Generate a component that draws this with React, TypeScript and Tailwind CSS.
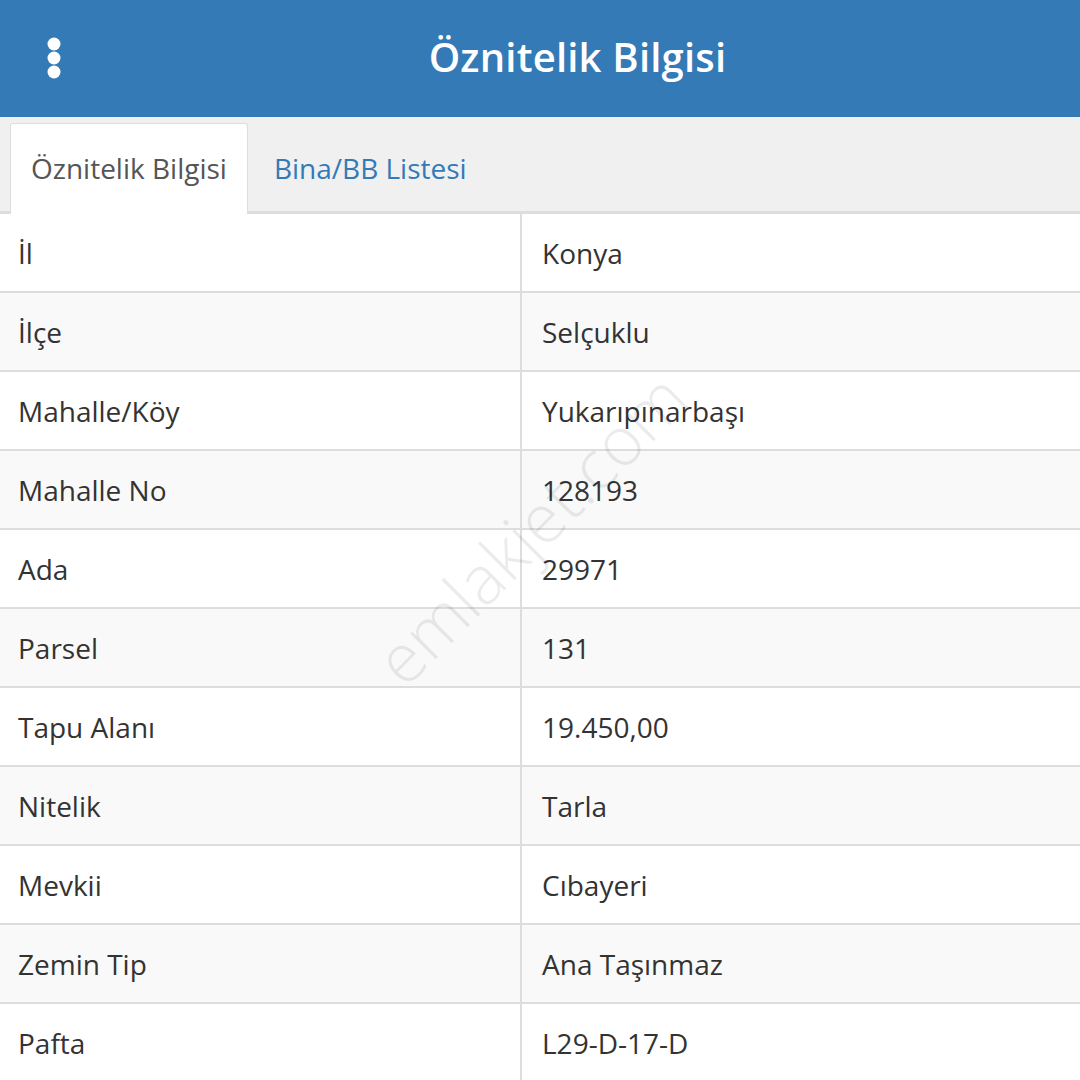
import { useState } from "react"

interface Row {
  label: string
  value: string
}

const rows: Row[] = [
  { label: "İl", value: "Konya" },
  { label: "İlçe", value: "Selçuklu" },
  { label: "Mahalle/Köy", value: "Yukarıpınarbaşı" },
  { label: "Mahalle No", value: "128193" },
  { label: "Ada", value: "29971" },
  { label: "Parsel", value: "131" },
  { label: "Tapu Alanı", value: "19.450,00" },
  { label: "Nitelik", value: "Tarla" },
  { label: "Mevkii", value: "Cıbayeri" },
  { label: "Zemin Tip", value: "Ana Taşınmaz" },
  { label: "Pafta", value: "L29-D-17-D" },
]

export default function App() {
  const [tab, setTab] = useState(0)

  return (
    <div
      className="relative w-[1080px] h-[1080px] overflow-hidden bg-white text-[#333]"
      style={{ fontFamily: '"Open Sans", "Noto Sans", sans-serif' }}
    >
      {/* header */}
      <div className="relative flex items-center justify-center h-[117px] bg-[#337ab7] text-white">
        <button className="absolute left-[40px] top-[36px] w-[28px] h-[44px] flex items-center justify-center">
          <svg width="14" height="42" viewBox="0 0 14 42" fill="white">
            <circle cx="7" cy="7" r="6.5" />
            <circle cx="7" cy="21" r="6.5" />
            <circle cx="7" cy="35" r="6.5" />
          </svg>
        </button>
        <h1 className="text-[40px] font-semibold tracking-[0.2px] pl-[75px] -mt-[4px]">Öznitelik Bilgisi</h1>
      </div>

      {/* tabs */}
      <div className="flex items-end h-[97px] bg-[#f0f0f0] border-b-[3px] border-[#dddddd] pl-[10px]">
        <button
          onClick={() => setTab(0)}
          className={`h-[91px] px-[20px] -mb-[3px] text-[28px] rounded-t-[3px] ${
            tab === 0
              ? "bg-white border border-b-0 border-[#dddddd] text-[#555]"
              : "text-[#337ab7]"
          }`}
        >
          <span className="relative -top-[1px]">Öznitelik Bilgisi</span>
        </button>
        <button
          onClick={() => setTab(1)}
          className={`h-[91px] px-[26px] -mb-[3px] text-[28px] rounded-t-[3px] ${
            tab === 1
              ? "bg-white border border-b-0 border-[#dddddd] text-[#555]"
              : "text-[#337ab7]"
          }`}
        >
          <span className="relative -top-[1px]">Bina/BB Listesi</span>
        </button>
      </div>

      {/* table */}
      <div>
        {rows.map((row, i) => (
          <div
            key={row.label}
            className={`grid grid-cols-[522px_1fr] h-[79px] border-b-2 border-[#dddddd] ${
              i % 2 === 1 ? "bg-[#f9f9f9]" : "bg-white"
            }`}
          >
            <div className="flex items-center pl-[18px] text-[28px] border-r-2 border-[#dddddd]">
              {row.label}
            </div>
            <div className="flex items-center pl-[20px] text-[28px]">{row.value}</div>
          </div>
        ))}
      </div>

      {/* watermark */}
      <div className="pointer-events-none absolute left-[530px] top-[528px] -translate-x-1/2 -translate-y-1/2 -rotate-[45deg] text-[68px] font-light text-black/[0.08] whitespace-nowrap">
        emlakjet.com
      </div>
    </div>
  )
}
